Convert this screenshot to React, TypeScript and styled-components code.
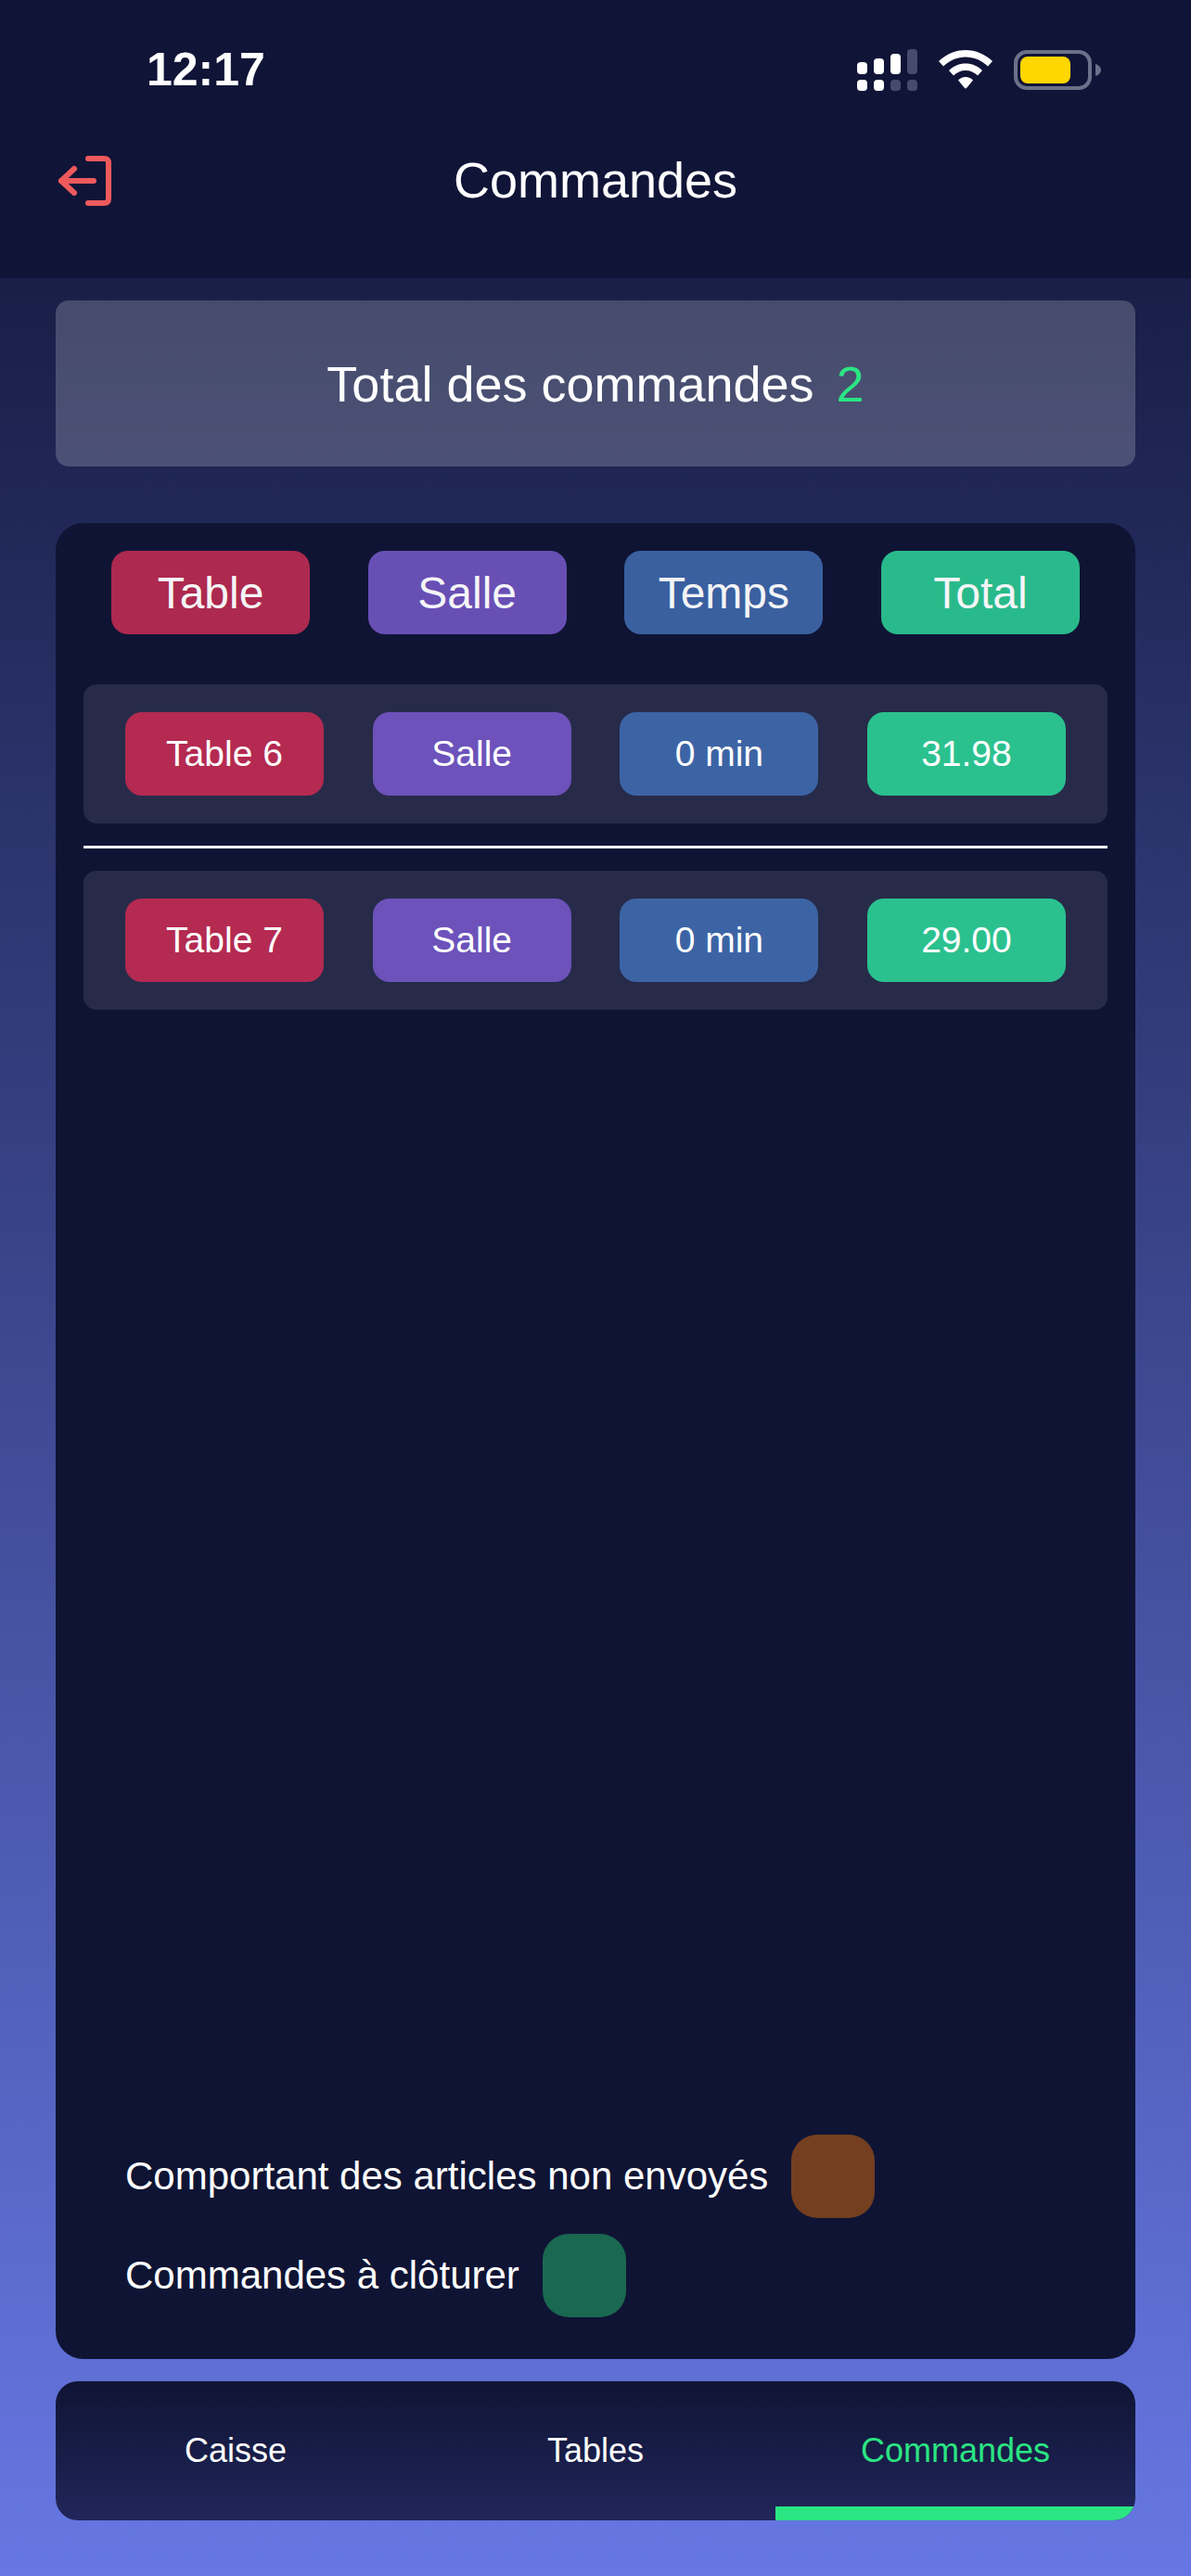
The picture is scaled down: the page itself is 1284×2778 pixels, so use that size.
import { createGlobalStyle, styled } from "styled-components";

const GlobalStyle = createGlobalStyle`
  html, body {
    margin: 0;
    padding: 0;
  }
  body {
    font-family: "Liberation Sans", Arial, sans-serif;
    color: #fff;
  }
`;

const Page = styled.div`
  width: 1284px;
  height: 2778px;
  display: flex;
  flex-direction: column;
  background: linear-gradient(180deg, #0f1434 0%, #6677e3 100%);
`;

const Header = styled.header`
  height: 300px;
  flex: none;
  background: #101437;
  display: flex;
  flex-direction: column;
`;

const StatusBar = styled.div`
  height: 150px;
  padding: 0 97px 0 158px;
  display: flex;
  align-items: center;
  justify-content: space-between;
  box-sizing: border-box;
`;

const Clock = styled.span`
  font-size: 50px;
  font-weight: 700;
`;

const StatusIcons = styled.div`
  display: flex;
  align-items: center;
  gap: 23px;
`;

const NavBar = styled.div`
  position: relative;
  height: 90px;
  margin-top: -1px;
  display: flex;
  align-items: center;
  justify-content: center;
`;

const ExitButton = styled.div`
  position: absolute;
  left: 60px;
  top: 17px;
  display: flex;
`;

const Title = styled.h1`
  margin: 0;
  font-size: 54px;
  font-weight: 400;
`;

const Content = styled.main`
  flex: 1;
  padding: 24px 60px 60px;
  display: flex;
  flex-direction: column;
`;

const Summary = styled.div`
  height: 179px;
  flex: none;
  border-radius: 14px;
  background: rgba(255, 255, 255, 0.2);
  display: flex;
  align-items: center;
  justify-content: center;
  gap: 24px;
  font-size: 54px;
`;

const SummaryCount = styled.span`
  color: #2be583;
`;

const Panel = styled.section`
  flex: 1;
  margin-top: 61px;
  padding: 30px 30px 45px;
  border-radius: 30px;
  background: #0f1434;
  display: flex;
  flex-direction: column;
`;

const HeadRow = styled.div`
  display: flex;
  justify-content: space-between;
  padding: 0 30px;
  margin-bottom: 54px;
`;

const OrderRow = styled.div`
  height: 150px;
  padding: 0 45px;
  border-radius: 14px;
  background: #272b49;
  display: flex;
  align-items: center;
  justify-content: space-between;
`;

const Divider = styled.hr`
  height: 3px;
  margin: 24px 0;
  border: 0;
  background: #fff;
`;

const chipColours = {
  red: "#b42a51",
  purple: "#6c52ba",
  blue: "#3c64a5",
  green: "#2bc18f",
};

type ChipTone = keyof typeof chipColours;

const Chip = styled.div<{ $tone: ChipTone; $head?: boolean }>`
  width: 214px;
  height: 90px;
  border-radius: 18px;
  background: ${(p) => chipColours[p.$tone]};
  display: flex;
  align-items: center;
  justify-content: center;
  font-size: ${(p) => (p.$head ? "48px" : "39px")};
  opacity: ${(p) => (p.$head ? 0.96 : 1)};
`;

const Legend = styled.div`
  margin-top: auto;
  padding-left: 45px;
  display: flex;
  flex-direction: column;
  gap: 17px;
`;

const LegendRow = styled.div`
  display: flex;
  align-items: center;
  gap: 25px;
  font-size: 42px;
`;

const Swatch = styled.span<{ $colour: string }>`
  width: 90px;
  height: 90px;
  border-radius: 28px;
  background: ${(p) => p.$colour};
`;

const TabBar = styled.nav`
  height: 150px;
  flex: none;
  margin-top: 24px;
  border-radius: 24px;
  overflow: hidden;
  background: linear-gradient(180deg, #0f1434 0%, #20265a 100%);
  display: grid;
  grid-template-columns: repeat(3, 1fr);
`;

const Tab = styled.div<{ $active?: boolean }>`
  position: relative;
  display: flex;
  align-items: center;
  justify-content: center;
  font-size: 36px;
  color: ${(p) => (p.$active ? "#2be583" : "#fff")};

  &::after {
    content: "";
    display: ${(p) => (p.$active ? "block" : "none")};
    position: absolute;
    left: 0;
    right: 0;
    bottom: 0;
    height: 15px;
    background: #2be583;
  }
`;

const SignalIcon = () => (
  <svg width="65" height="45" viewBox="0 0 65 45">
    <g fill="#fff">
      <rect x="0" y="14" width="11" height="13" rx="4" />
      <rect x="18" y="10" width="11" height="17" rx="4" />
      <rect x="36" y="5" width="11" height="22" rx="4" />
      <rect x="0" y="33" width="11" height="12" rx="4" />
      <rect x="18" y="33" width="11" height="12" rx="4" />
    </g>
    <g fill="#474b6c">
      <rect x="54" y="0" width="11" height="27" rx="4" />
      <rect x="36" y="33" width="11" height="12" rx="4" />
      <rect x="54" y="33" width="11" height="12" rx="4" />
    </g>
  </svg>
);

const WifiIcon = () => (
  <svg width="58" height="42" viewBox="0 0 58 42">
    <path
      d="M29 0C40 0 50 4.500 58 12L53 17.500C46 11 38 7.500 29 7.500C20 7.500 12 11 5 17.500L0 12C8 4.500 18 0 29 0Z"
      fill="#fff"
    />
    <path
      d="M29 14.500C36 14.500 42 17 47 22L42 27.500C38.500 24 34 22 29 22C24 22 19.500 24 16 27.500L11 22C16 17 22 14.500 29 14.500Z"
      fill="#fff"
    />
    <path
      d="M29 29C32 29 35 30.200 37 32.500L30 41C29.500 41.600 28.500 41.600 28 41L21 32.500C23 30.200 26 29 29 29Z"
      fill="#fff"
    />
  </svg>
);

const BatteryIcon = () => (
  <svg width="94" height="43" viewBox="0 0 94 43">
    <rect x="2" y="2" width="80" height="39" rx="12" fill="none" stroke="#6d7089" strokeWidth="4" />
    <rect x="7" y="7" width="54" height="29" rx="8" fill="#ffd600" />
    <path d="M88 15C91.500 16 94 18.500 94 21.500C94 24.500 91.500 27 88 28Z" fill="#6d7089" />
  </svg>
);

const ExitIcon = () => (
  <svg width="60" height="58" viewBox="0 0 60 58" fill="none" stroke="#ee5a5c" strokeWidth="6" strokeLinecap="round" strokeLinejoin="round">
    <path d="M35 5H52C55.500 5 57 6.500 57 10V48C57 51.500 55.500 53 52 53H35" />
    <path d="M6 29H41" />
    <path d="M20 16L6 29L20 42" />
  </svg>
);

const columns: ChipTone[] = ["red", "purple", "blue", "green"];

const orders = [
  ["Table 6", "Salle", "0 min", "31.98"],
  ["Table 7", "Salle", "0 min", "29.00"],
];

export default function App() {
  return (
    <Page>
      <GlobalStyle />
      <Header>
        <StatusBar>
          <Clock>12:17</Clock>
          <StatusIcons>
            <SignalIcon />
            <WifiIcon />
            <BatteryIcon />
          </StatusIcons>
        </StatusBar>
        <NavBar>
          <ExitButton>
            <ExitIcon />
          </ExitButton>
          <Title>Commandes</Title>
        </NavBar>
      </Header>
      <Content>
        <Summary>
          Total des commandes
          <SummaryCount>2</SummaryCount>
        </Summary>
        <Panel>
          <HeadRow>
            {["Table", "Salle", "Temps", "Total"].map((label, i) => (
              <Chip key={label} $tone={columns[i]} $head>
                {label}
              </Chip>
            ))}
          </HeadRow>
          {orders.map((order, index) => (
            <div key={order[0]}>
              {index > 0 && <Divider />}
              <OrderRow>
                {order.map((value, i) => (
                  <Chip key={i} $tone={columns[i]}>
                    {value}
                  </Chip>
                ))}
              </OrderRow>
            </div>
          ))}
          <Legend>
            <LegendRow>
              Comportant des articles non envoyés
              <Swatch $colour="#733f20" />
            </LegendRow>
            <LegendRow>
              Commandes à clôturer
              <Swatch $colour="#1a6850" />
            </LegendRow>
          </Legend>
        </Panel>
        <TabBar>
          <Tab>Caisse</Tab>
          <Tab>Tables</Tab>
          <Tab $active>Commandes</Tab>
        </TabBar>
      </Content>
    </Page>
  );
}
